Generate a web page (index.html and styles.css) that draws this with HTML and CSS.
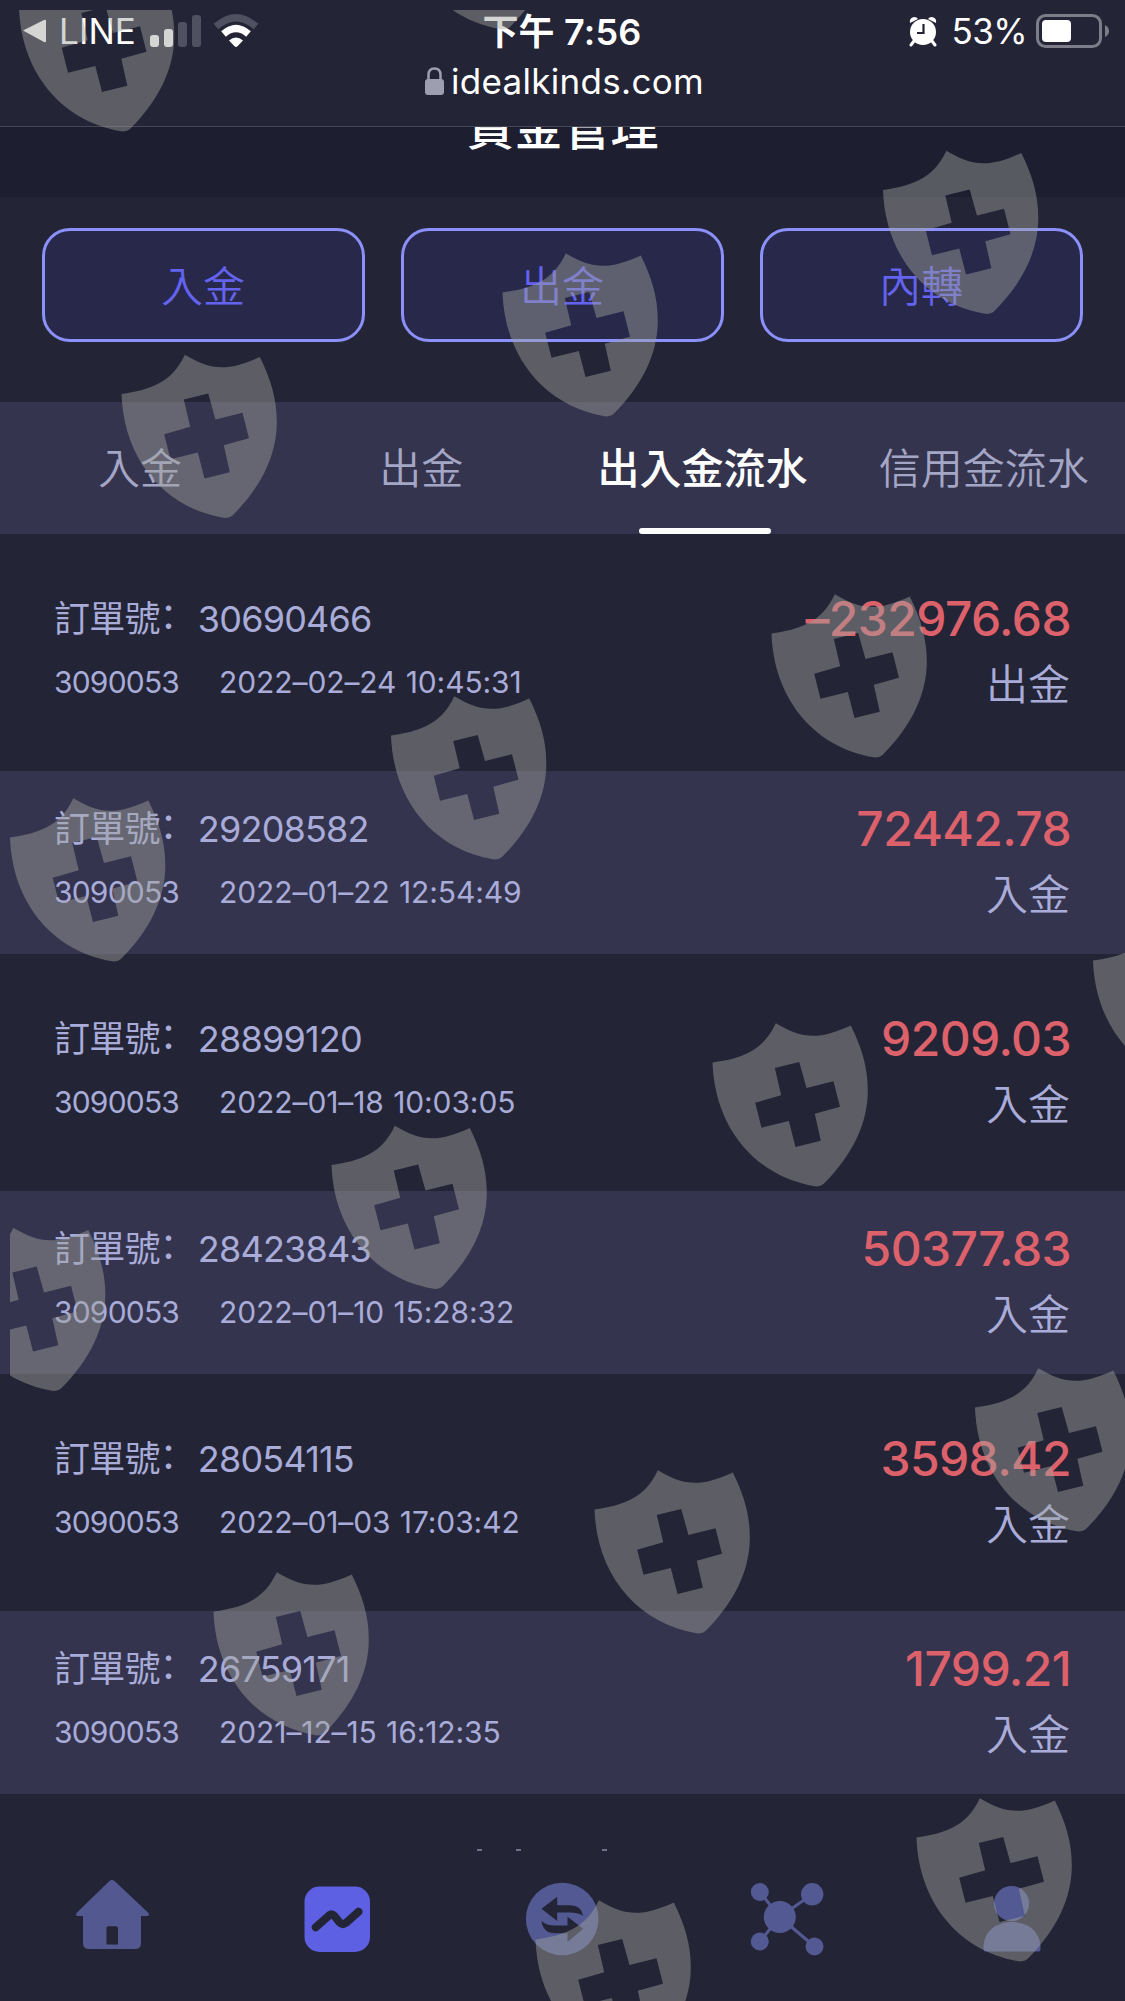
FILE: index.html
```html
<!DOCTYPE html>
<html lang="zh-Hant">
<head>
  <meta charset="UTF-8" />
  <title>資金管理</title>
  <meta name="viewport" content="width=device-width, initial-scale=1.0">
  <link rel="stylesheet" href="styles.css">
</head>
<body>
  <div class="top">
    <div class="status">
      <div class="status-left">
        <svg class="back" width="24" height="24" viewBox="0 0 24 24"><path d="M1 11.5 22 1q2-.8 2 1v20q0 1.800-2 1Z" fill="#fff"/></svg>
        <span class="app">LINE</span>
        <svg class="signal" width="51" height="34" viewBox="0 0 51 34">
          <rect x="0" y="21" width="9" height="12" rx="3" fill="#fff"/>
          <rect x="14" y="15" width="9" height="18" rx="3" fill="#fff"/>
          <rect x="28" y="8" width="9" height="25" rx="3" fill="#4f5060"/>
          <rect x="42" y="1" width="9" height="32" rx="3" fill="#4f5060"/>
        </svg>
        <svg class="wifi" width="46" height="34" viewBox="0 0 46 34">
          <path d="M3 12.500Q23-5 43 12.500" fill="none" stroke="#4f5060" stroke-width="7"/>
          <path d="M10.500 20Q23 9 35.500 20" fill="none" stroke="#fff" stroke-width="7"/>
          <path d="M16 26.500Q23 20.500 30 26.500L24.500 32.300Q23 33.800 21.500 32.300Z" fill="#fff"/>
        </svg>
      </div>
      <div class="time">下午 7:56</div>
      <div class="status-right">
        <svg width="28" height="31" viewBox="0 0 28 31">
          <path d="m5 25-3 4M23 25l3 4" stroke="#fff" stroke-width="3" stroke-linecap="round"/>
          <path d="M1 7Q0 2 5 1q3 0 4 2ZM27 7q1-5-4-6-3 0-4 2Z" fill="#fff"/>
          <circle cx="14" cy="16" r="13" fill="#fff"/>
          <path d="M14.500 8v9H8" fill="none" stroke="#232435" stroke-width="2.200"/>
        </svg>
        <span class="percent">53%</span>
        <svg width="74" height="34" viewBox="0 0 74 34">
          <rect x="1.500" y="1.500" width="63" height="31" rx="8" fill="none" stroke="#7c7d89" stroke-width="3"/>
          <rect x="6" y="6" width="29" height="22" rx="4" fill="#fff"/>
          <path d="M69 11q4 2 4 6t-4 6Z" fill="#7c7d89"/>
        </svg>
      </div>
    </div>
    <div class="address">
      <svg width="19" height="28" viewBox="0 0 19 28">
        <path d="M3.500 13V8q0-6.500 6-6.500t6 6.500v5" fill="none" stroke="#9d9eaf" stroke-width="2.500"/>
        <rect y="12" width="19" height="16" rx="3" fill="#9d9eaf"/>
      </svg>
      <span>idealkinds.com</span>
    </div>
  </div>

  <div class="header"><h1>資金管理</h1></div>

  <div class="actions">
    <button>入金</button>
    <button>出金</button>
    <button>內轉</button>
  </div>

  <div class="tabs">
    <div class="tab">入金</div>
    <div class="tab">出金</div>
    <div class="tab active">出入金流水</div>
    <div class="tab">信用金流水</div>
  </div>

  <div class="list">
    <div class="item">
      <div class="info">
        <div class="order">訂單號<span class="colon" lang="zh-Hans">：</span>30690466</div>
        <div class="detail"><span>3090053</span><span class="date">2022–02–24 10:45:31</span></div>
      </div>
      <div class="result"><div class="amount">–232976.68</div><div class="type">出金</div></div>
    </div>
    <div class="item">
      <div class="info">
        <div class="order">訂單號<span class="colon" lang="zh-Hans">：</span>29208582</div>
        <div class="detail"><span>3090053</span><span class="date">2022–01–22 12:54:49</span></div>
      </div>
      <div class="result"><div class="amount">72442.78</div><div class="type">入金</div></div>
    </div>
    <div class="item">
      <div class="info">
        <div class="order">訂單號<span class="colon" lang="zh-Hans">：</span>28899120</div>
        <div class="detail"><span>3090053</span><span class="date">2022–01–18 10:03:05</span></div>
      </div>
      <div class="result"><div class="amount">9209.03</div><div class="type">入金</div></div>
    </div>
    <div class="item">
      <div class="info">
        <div class="order">訂單號<span class="colon" lang="zh-Hans">：</span>28423843</div>
        <div class="detail"><span>3090053</span><span class="date">2022–01–10 15:28:32</span></div>
      </div>
      <div class="result"><div class="amount">50377.83</div><div class="type">入金</div></div>
    </div>
    <div class="item">
      <div class="info">
        <div class="order">訂單號<span class="colon" lang="zh-Hans">：</span>28054115</div>
        <div class="detail"><span>3090053</span><span class="date">2022–01–03 17:03:42</span></div>
      </div>
      <div class="result"><div class="amount">3598.42</div><div class="type">入金</div></div>
    </div>
    <div class="item">
      <div class="info">
        <div class="order">訂單號<span class="colon" lang="zh-Hans">：</span>26759171</div>
        <div class="detail"><span>3090053</span><span class="date">2021–12–15 16:12:35</span></div>
      </div>
      <div class="result"><div class="amount">1799.21</div><div class="type">入金</div></div>
    </div>
  </div>

  <!-- top edge of the line hidden behind the nav -->
  <div class="more">
    <svg width="150" height="2" viewBox="0 0 150 2"><path d="M17 1h5M56 1h5M142 1h5" stroke="#8b8da4" stroke-width="1.500"/></svg>
  </div>

  <div class="nav">
    <a>
      <svg width="80" height="80" viewBox="0 0 80 80" fill="#535990">
        <path fill-rule="evenodd" d="M36.500 2Q39 0 41.500 2L75 33.500Q77.500 37 74 37H68V64Q68 70 62 70H16Q10 70 10 64V37H5Q1.500 37 4 33.500ZM35.500 47.300q-2 0-2 2v16.200H45V49.300q0-2-2-2Z"/>
      </svg>
    </a>
    <a>
      <svg width="80" height="80" viewBox="0 0 80 80">
        <rect x="6.500" y="7.500" width="65.500" height="65.500" rx="15" fill="#5e60e3"/>
        <path d="M17.800 48.300 31 36.500q2.800-2.200 5.300.3l5.200 6.500q3 3.200 6.500.6l12.500-11.200" fill="none" stroke="#232435" stroke-width="8" stroke-linecap="round"/>
      </svg>
    </a>
    <a>
      <svg width="80" height="80" viewBox="0 0 80 80">
        <circle cx="39.200" cy="40" r="36.300" fill="#535993"/>
        <path d="M18.500 29.700 34.200 17.700V26.300H47Q58 26 60.200 37 56 33.500 47 33.500H34.200V42ZM60.200 49.700 44.500 63V54.300H32Q20 54 18.500 42 23 46.500 32 46.500H44.500V37.700Z" fill="#232435"/>
      </svg>
    </a>
    <a>
      <svg width="80" height="80" viewBox="0 0 80 80" fill="#535993">
        <path d="M11.800 13 31.800 38 64.200 15.300M11.800 62.500 31.800 38 66.500 67.500" fill="none" stroke="#535993" stroke-width="3"/>
        <circle cx="11.800" cy="13" r="9"/>
        <circle cx="64.200" cy="15.300" r="11.200"/>
        <circle cx="31.800" cy="38" r="16"/>
        <circle cx="11.800" cy="62.500" r="9"/>
        <circle cx="66.500" cy="67.500" r="9"/>
      </svg>
    </a>
    <a>
      <svg width="80" height="80" viewBox="0 0 80 80" fill="#535993">
        <circle cx="38.500" cy="24.600" r="17.600"/>
        <path d="M12 72.500Q10.500 72.500 10.500 68.500C10.500 53.500 22 43 39 43S67.500 53.500 67.500 68.500Q67.500 72.500 66 72.500Z"/>
      </svg>
    </a>
  </div>

  <svg class="shields" viewBox="10 10 1115 1991">
    <defs>
      <path id="shield" fill-rule="evenodd" d="M0 39.500C28 35.500 50 29 63.300 0.300 88 15 105 18 138.300 2.500 149 24 155.300 44 155.300 67 155.500 100 140 132 111 161Q108 164 102 163.300C40 152.500 2 102 0 39.500ZM62.300 45 86.700 39 94 65 121 58.300 127.500 83.700 102.300 90.700 108.300 117.700 83 124 76.300 98 49 104.700 42.700 79.700 68.700 72.300Z"/>
    </defs>
    <use href="#shield" x="19" y="-32"/>
    <use href="#shield" x="399" y="-134"/>
    <use href="#shield" x="883" y="150.500"/>
    <use href="#shield" x="502.500" y="253"/>
    <use href="#shield" x="121.500" y="354.500"/>
    <use href="#shield" x="771.500" y="594"/>
    <use href="#shield" x="391" y="696"/>
    <use href="#shield" x="10" y="798"/>
    <use href="#shield" x="1093" y="921"/>
    <use href="#shield" x="712.500" y="1023"/>
    <use href="#shield" x="331.500" y="1125.500"/>
    <use href="#shield" x="-50" y="1227.500"/>
    <use href="#shield" x="975" y="1368"/>
    <use href="#shield" x="594.500" y="1470"/>
    <use href="#shield" x="213.500" y="1572"/>
    <use href="#shield" x="916.500" y="1798"/>
    <use href="#shield" x="535.500" y="1900"/>
  </svg>
</body>
</html>
```
FILE: styles.css
```css
* {
  box-sizing: border-box;
}
body {
  margin: 0;
  width: 1125px;
  height: 2001px;
  overflow: hidden;
  position: relative;
  background: #232435;
  color: #a9acd9;
  font-family: Inter, "Noto Sans CJK TC", sans-serif;
}
svg {
  display: block;
  flex: none;
}
.top {
  height: 127px;
  border-bottom: 1px solid #454656;
  color: #fff;
}
.status {
  display: grid;
  grid-template-columns: 1fr auto 1fr;
  align-items: center;
  height: 60px;
  padding: 2px 15px 0 22px;
  font-size: 35px;
}
.status-left, .status-right {
  display: flex;
  align-items: center;
}
.status-right {
  justify-content: flex-end;
}
.app {
  margin: 0 14px 0 13px;
  font-size: 35px;
  letter-spacing: 0.1px;
}
.wifi {
  margin-left: 12px;
}
.time {
  padding-bottom: 4px;
  font-size: 36px;
  font-weight: 600;
  letter-spacing: 0.2px;
  transform: translateX(-4px);
}
.percent {
  margin: 0 9px 0 15px;
  letter-spacing: -0.6px;
}
.address {
  display: flex;
  justify-content: center;
  align-items: center;
  gap: 7px;
  height: 42px;
  padding-left: 4px;
  font-size: 35px;
  letter-spacing: 0.3px;
}
.header {
  height: 70px;
  overflow: hidden;
  background: #1d1e2f;
}
h1 {
  margin: -29px 0 0;
  color: #fff;
  font-size: 48px;
  line-height: 60px;
  font-weight: 500;
  text-align: center;
}
.actions {
  display: flex;
  gap: 36px;
  height: 205px;
  padding: 31px 42px 0;
}
button {
  flex: 1;
  height: 114px;
  padding: 0 1px 4px 0;
  border: 3px solid #8b90fb;
  border-radius: 28px;
  background: #27284a;
  color: #6463ee;
  font: 350 42px Inter, "Noto Sans CJK TC", sans-serif;
}
.tabs {
  display: flex;
  height: 132px;
  background: #35344e;
}
.tab {
  display: flex;
  flex: 1;
  flex-direction: column;
  align-items: center;
  padding: 4px 1px 0 0;
  font-size: 42px;
  line-height: 126px;
  color: #a4a6c6;
  font-weight: 350;
  white-space: nowrap;
}
.tab.active {
  color: #fff;
  font-weight: 500;
}
.tab.active::after {
  content: "";
  width: 132px;
  height: 6px;
  margin: -4px 0 0 4px;
  border-radius: 3px;
  background: #fff;
}
.list {
  display: flex;
  flex-direction: column;
  gap: 27px;
  padding-top: 27px;
}
.item {
  display: flex;
  justify-content: space-between;
  height: 183px;
  padding: 28px 55px 0 54px;
}
.item:nth-child(even) {
  background: #35344e;
}
.order {
  font-size: 36px;
  line-height: 60px;
  letter-spacing: -0.8px;
}
.colon {
  margin-right: 3px;
  font-family: "Noto Sans CJK SC", sans-serif;
  line-height: 1;
  vertical-align: 3px;
}
.detail {
  display: flex;
  gap: 40px;
  font-size: 30px;
  line-height: 66px;
  letter-spacing: -0.8px;
}
.date {
  letter-spacing: -0.1px;
  word-spacing: 1px;
}
.result {
  text-align: right;
}
.amount {
  margin-right: -1px;
  color: #dc616b;
  font-size: 48px;
  font-weight: 500;
  line-height: 60px;
  letter-spacing: -0.6px;
}
.type {
  font-size: 42px;
  line-height: 72px;
  font-weight: 350;
}
.more {
  height: 57px;
  padding: 55px 0 0 460px;
}
.nav {
  display: flex;
  height: 150px;
}
.nav a {
  display: flex;
  flex: 1;
  justify-content: center;
  padding-top: 28px;
}
/* watermark */
.shields {
  position: absolute;
  left: 10px;
  top: 10px;
  width: 1115px;
  height: 1991px;
  fill: rgba(162, 165, 160, 0.45);
  pointer-events: none;
}
```
